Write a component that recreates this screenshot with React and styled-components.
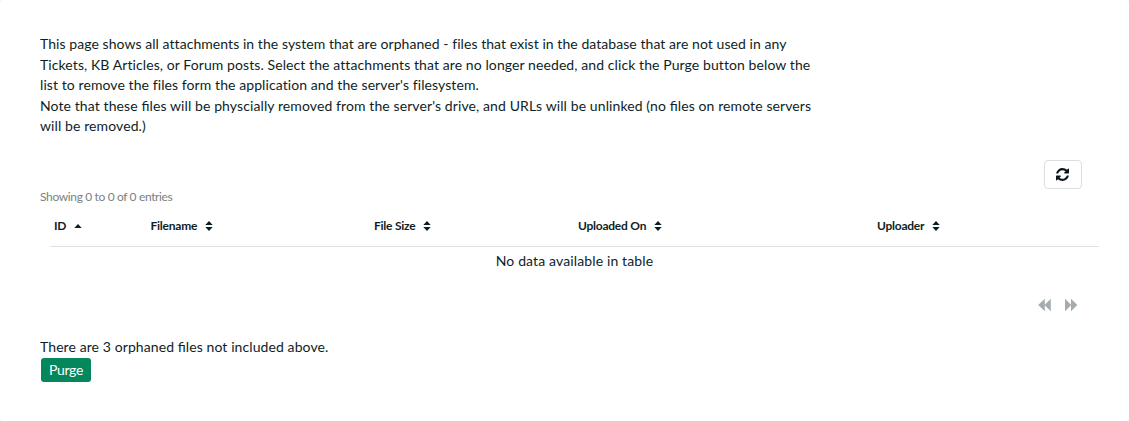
import React from "react";
import styled, { createGlobalStyle } from "styled-components";

const Global = createGlobalStyle`
  * { box-sizing: border-box; }
  body { margin: 0; background: #f0f2f3; font-family: Lato, sans-serif; font-size: 14px; color: #0f1e25; }
`;
const Panel = styled.main`
  height: 421px; background: #fff; border-radius: 3px; padding: 34px 30px 0 40px; overflow: hidden;
`;
const Intro = styled.p`
  margin: 0; width: 790px; line-height: 20.5px; white-space: nowrap;
`;
const Line = styled.span`
  display: block;
  letter-spacing: ${p => p.$spacing}px;
  font-feature-settings: "liga" ${p => (p.$liga ? 1 : 0)};
`;
const Toolbar = styled.div`
  display: flex; justify-content: flex-end; padding-right: 17px; margin-top: 23.5px; height: 29px;
`;
const RefreshButton = styled.button`
  width: 38px; height: 29px; display: grid; place-items: center; padding: 0 1px 0 0; background: #fff;
  border: 1px solid #dcdedf; border-radius: 4px; color: #0a171c;
`;
const Info = styled.div`
  font-size: 12px; line-height: 16px; color: #7a7f82; height: 16px; letter-spacing: -0.36px;
`;
const Table = styled.div`margin-left: 10px;`;
const Head = styled.div`
  display: grid; grid-template-columns: 96.5px 223.5px 204px 299px 1fr; height: 41.5px; padding: 12.5px 0 0 4px;
  border-bottom: 1px solid #dfe1e2; font-size: 12px; font-weight: 700; line-height: 16px; letter-spacing: -0.24px;
`;
const HeadCell = styled.div`display: flex; gap: 8px; align-items: center; height: 16px;`;
const Empty = styled.div`height: 30px; line-height: 28px; text-align: center; letter-spacing: 0.13px;`;
const Pager = styled.div`
  display: flex; justify-content: flex-end; gap: 12px; height: 14px; margin-top: 21px; padding-right: 21px; color: #a3acb0;
`;
const Note = styled.div`margin-top: 25px; line-height: 20px;`;
const Purge = styled.button`
  display: block; width: 50px; height: 24px; margin: 1px 0 0 1px; padding: 0; border: 0; border-radius: 3px;
  background: #05875d; color: #fff; font: 14px Lato, sans-serif; letter-spacing: -0.3px;
`;

const Refresh = () => (
  <svg width="13" height="13" viewBox="0 0 1536 1536" fill="currentColor">
    <path d="M1511 928q0 5-1 7-64 268-268 434.5T764 1536q-146 0-282.5-55T238 1324l-129 129q-19 19-45 19t-45-19-19-45V960q0-26 19-45t45-19h448q26 0 45 19t19 45-19 45l-137 137q71 66 161 102t187 36q134 0 250-65t186-179q11-17 53-117 8-23 30-23h192q13 0 22.5 9.5t9.5 22.5zm25-800v448q0 26-19 45t-45 19h-448q-26 0-45-19t-19-45 19-45l138-138Q969 256 768 256q-134 0-250 65T332 500q-11 17-53 117-8 23-30 23H50q-13 0-22.5-9.5T18 608v-7q65-268 270-434.5T768 0q146 0 284 55.5T1297 212l130-129q19-19 45-19t45 19 19 45z" />
  </svg>
);
const Sort = ({ up }) => (
  <svg width="8" height="10" viewBox="0 0 8 10" fill="currentColor">
    {up ? <path d="M0.3 7h7.4L4 3z" /> : <path d="M0.3 4h7.4L4 0zM0.3 6h7.4L4 10z" />}
  </svg>
);
const Double = ({ next }) => (
  <svg width="14" height="14" viewBox="0 0 14 14" fill="currentColor">
    <path d={next ? "M1 0.8l6.3 6.2L1 13.2zM7 0.8l6.3 6.2L7 13.2z" : "M12.8 0.8L6.5 7l6.3 6.2zM6.8 0.8L0.2 7l6.6 6.2z"} />
  </svg>
);

export default function App() {
  return (
    <>
      <Global />
      <Panel>
        <Intro>
          <Line $spacing={0.06}>This page shows all attachments in the system that are orphaned - files that exist in the database that are not used in any</Line>
          <Line $spacing={0.09}>Tickets, KB Articles, or Forum posts. Select the attachments that are no longer needed, and click the Purge button below the</Line>
          <Line $spacing={0.085}>list to remove the files form the application and the server's filesystem.</Line>
          <Line $spacing={0.1} $liga>Note that these files will be physcially removed from the server's drive, and URLs will be unlinked (no files on remote servers</Line>
          <Line $spacing={0.1}>will be removed.)</Line>
        </Intro>
        <Toolbar><RefreshButton aria-label="Refresh"><Refresh /></RefreshButton></Toolbar>
        <Info>Showing 0 to 0 of 0 entries</Info>
        <Table>
          <Head>
            <HeadCell>ID <Sort up /></HeadCell>
            <HeadCell>Filename <Sort /></HeadCell>
            <HeadCell>File Size <Sort /></HeadCell>
            <HeadCell>Uploaded On <Sort /></HeadCell>
            <HeadCell>Uploader <Sort /></HeadCell>
          </Head>
          <Empty>No data available in table</Empty>
        </Table>
        <Pager><Double /><Double next /></Pager>
        <Note><Line $spacing={0.09} $liga>There are 3 orphaned files not included above.</Line></Note>
        <Purge>Purge</Purge>
      </Panel>
    </>
  );
}
